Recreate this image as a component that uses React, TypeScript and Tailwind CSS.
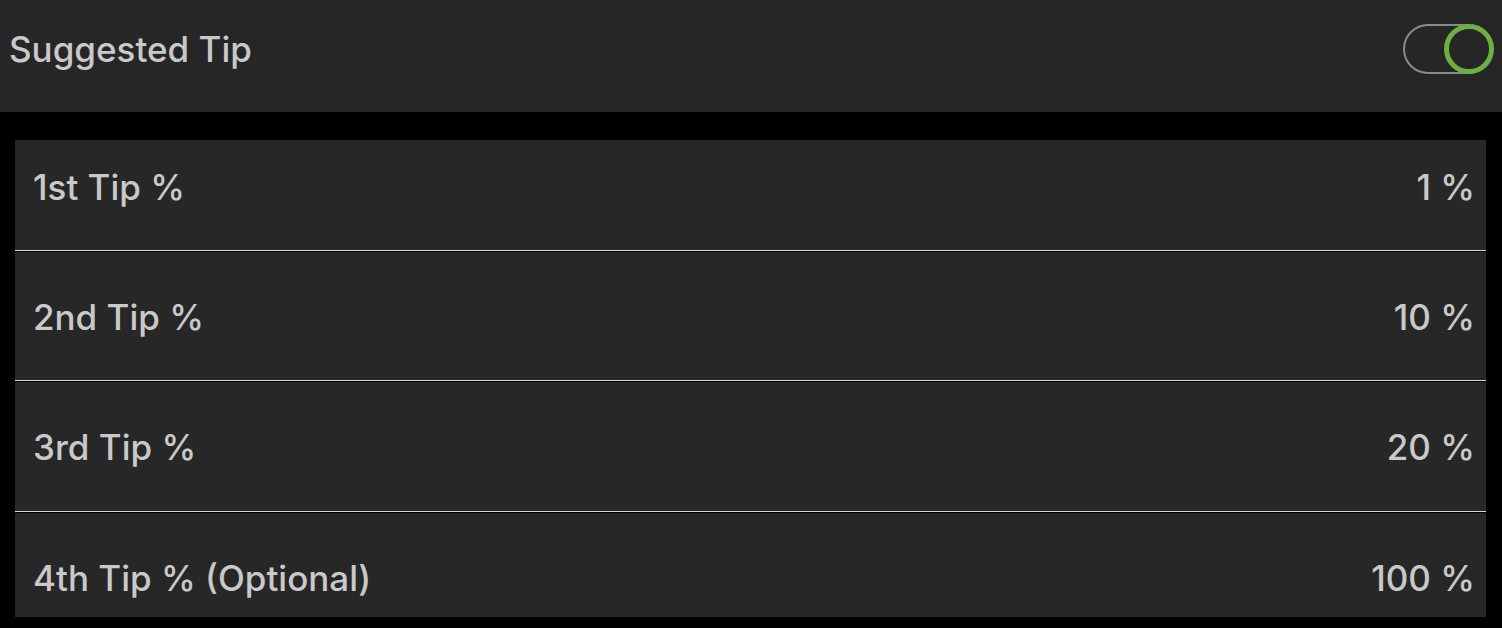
const rows = [
  { label: '1st Tip %', value: '1 %', h: 'h-[110px]', pad: 'pb-[16px]' },
  { label: '2nd Tip %', value: '10 %', h: 'h-[128px]', pad: 'pt-[2px]' },
  { label: '3rd Tip %', value: '20 %', h: 'h-[129px]', pad: 'pt-[2px]' },
  { label: '4th Tip % (Optional)', value: '100 %', h: 'h-[104px]', pad: 'pt-[26px]' },
];

function Toggle() {
  // switched on: green ring knob sitting on the right end of the track
  return (
    <div className="relative w-[90px] h-[50px] rounded-full border-2 border-[#8a8a8a]">
      <div className="absolute right-[-3px] top-[-2px] w-[50px] h-[50px] rounded-full border-[5px] border-[#6cb043] bg-[#262626]" />
    </div>
  );
}

export default function App() {
  return (
    <div
      className="w-[1502px] h-[628px] bg-black text-[#c9c9c9] overflow-hidden"
      style={{ fontFamily: 'Inter, Lato, sans-serif' }}
    >
      {/* Header */}
      <div className="h-[112px] bg-[#262626] flex items-center justify-between pl-[9px] pr-[9px] pb-[14px]">
        <span className="text-[35px] font-medium">Suggested Tip</span>
        <Toggle />
      </div>

      {/* Tip rows */}
      <div className="mt-[28px] mx-[15px] w-[1471px] flex flex-col">
        {rows.map((row, i) => (
          <div key={i} className="flex flex-col">
            {i > 0 && <div className="h-[2px] bg-[#d8d8d8] border-b border-black" />}
            <div
              className={`${row.h} ${row.pad} bg-[#272727] flex items-center justify-between pl-[18px] pr-[11px]`}
            >
              <span className="text-[35px] font-medium">{row.label}</span>
              <span className="text-[35px] font-medium">{row.value}</span>
            </div>
          </div>
        ))}
      </div>
    </div>
  );
}
